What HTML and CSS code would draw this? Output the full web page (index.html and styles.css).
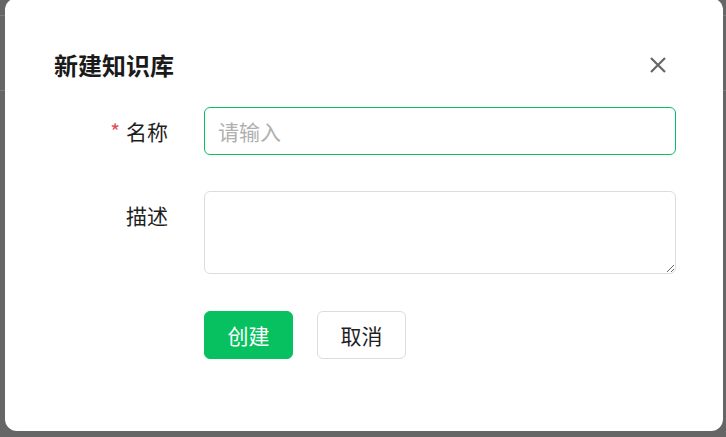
FILE: index.html
```html
<!DOCTYPE html>
<html lang="zh-CN">
<head>
<meta charset="utf-8">
<title>新建知识库</title>
<link rel="stylesheet" href="styles.css">
</head>
<body>
<div class="dialog">
  <div class="header">
    <div class="title">新建知识库</div>
    <button class="close" type="button" aria-label="关闭">
      <svg width="16" height="16" viewBox="0 0 16 16"><path d="M1 1L15 15M15 1L1 15" stroke="#666" stroke-width="2.2" stroke-linecap="butt" fill="none"/></svg>
    </button>
  </div>
  <form class="form">
    <div class="row">
      <label class="label"><span class="req">*</span>名称</label>
      <div class="control"><input class="input" type="text" placeholder="请输入"></div>
    </div>
    <div class="row">
      <label class="label">描述</label>
      <div class="control"><textarea class="textarea"></textarea></div>
    </div>
    <div class="actions">
      <button class="btn btn-primary" type="button">创建</button>
      <button class="btn btn-default" type="button">取消</button>
    </div>
  </form>
</div>
</body>
</html>
```
FILE: styles.css
```css
html, body {
  margin: 0;
  padding: 0;
  height: 437px;
  overflow: hidden;
}
body {
  background-color: #666;
  background-image:
    linear-gradient(to bottom, transparent 15px, #7b7b7b 15px, #7b7b7b 16px, transparent 16px),
    linear-gradient(to bottom, transparent 90px, #7b7b7b 90px, #7b7b7b 91px, transparent 91px);
  font-family: "Noto Sans CJK SC", "Noto Sans", sans-serif;
  color: #1f1f1f;
}
.dialog {
  box-sizing: border-box;
  margin: -2px 3px 0 5px;
  height: 433px;
  background: #fff;
  border-radius: 12px;
  padding: 49px 47px 0 49px;
}
.header {
  display: flex;
  align-items: center;
  justify-content: space-between;
  height: 36px;
}
.title {
  font-size: 24px;
  line-height: 36px;
  font-weight: 700;
  color: #1a1a1a;
}
.close {
  width: 36px;
  height: 36px;
  padding: 0;
  border: 0;
  background: transparent;
  display: flex;
  align-items: center;
  justify-content: center;
}
.form {
  margin-top: 24px;
}
.row {
  display: flex;
  align-items: flex-start;
  margin-bottom: 36px;
}
.label {
  box-sizing: border-box;
  width: 150px;
  flex: none;
  padding-right: 36px;
  text-align: right;
  font-size: 21px;
  line-height: 48px;
  color: #1f1f1f;
}
.req {
  color: #e34d59;
  margin-right: 6px;
}
.control {
  flex: 1;
  display: flex;
}
.input, .textarea {
  box-sizing: border-box;
  width: 100%;
  font-family: inherit;
  font-size: 21px;
  border-radius: 6px;
  outline: none;
  color: #1f1f1f;
  background: #fff;
}
.input {
  height: 48px;
  border: 1px solid #07c160;
  padding: 0 13px;
}
.input::placeholder {
  color: #b0b0b0;
}
.textarea {
  height: 83px;
  border: 1px solid #dcdcdc;
  padding: 8px 13px;
  resize: vertical;
  display: block;
}
.actions {
  display: flex;
  gap: 24px;
  margin-top: 37px;
  margin-left: 150px;
}
.btn {
  box-sizing: border-box;
  height: 48px;
  width: 89px;
  padding: 0;
  border-radius: 6px;
  font-family: inherit;
  font-size: 21px;
  cursor: pointer;
}
.btn-primary {
  background: #07c160;
  border: 1px solid #07c160;
  color: #fff;
}
.btn-default {
  background: #fff;
  border: 1px solid #dcdcdc;
  color: #1f1f1f;
}
```
